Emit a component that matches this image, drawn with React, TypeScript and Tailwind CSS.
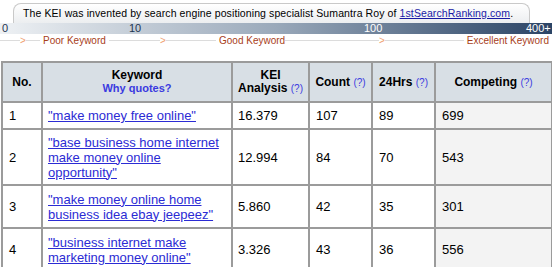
import React from 'react';

const rows = [
  { no: 1, kw: ['"make money free online"'], kei: '16.379', count: 107, hrs: 89, comp: 699 },
  { no: 2, kw: ['"base business home internet', 'make money online', 'opportunity"'], kei: '12.994', count: 84, hrs: 70, comp: 543 },
  { no: 3, kw: ['"make money online home', 'business idea ebay jeepeez"'], kei: '5.860', count: 42, hrs: 35, comp: 301 },
  { no: 4, kw: ['"business internet make', 'marketing money online"'], kei: '3.326', count: 43, hrs: 36, comp: 556 },
];

const Q = () => <span className="text-[10px] font-normal text-[#3a3ae0]">(?)</span>;

const Arrow = () => <span className="w-[6px] text-[10px] leading-none text-[#f0a070]">&gt;</span>;
const Line = ({ w }: { w: string }) => <div className={`h-px bg-[#dcdcdc] ${w}`} />;

export default function App() {
  return (
    <div className="w-[552px] h-[267px] overflow-hidden bg-white font-['Liberation_Sans',Arial,sans-serif]">
      {/* tab with credit text */}
      <div className="ml-[13px] mt-[3px] w-[517px] h-[20px] rounded-t-[8px] border border-b-0 border-[#c9c9c9] bg-gradient-to-b from-white to-[#eceef0] flex items-center pl-[9px] text-[10.5px] text-black tracking-[0.1px]">
        The KEI was invented by search engine positioning specialist Sumantra Roy of&nbsp;
        <span className="text-[#1a1aa6] underline">1stSearchRanking.com</span>.
      </div>

      {/* gradient scale */}
      <div className="h-[11px] bg-gradient-to-r from-[#eef1f4] via-[#9aa9ba] to-[#2b4465] relative text-[11px] leading-[11px]">
        <span className="absolute left-[2px] text-[#1e3552]">0</span>
        <span className="absolute left-[129px] text-[#1e3552]">10</span>
        <span className="absolute left-[364px] text-white">100</span>
        <span className="absolute left-[526px] text-white">400+</span>
      </div>

      {/* scale labels */}
      <div className="h-[13px] flex items-center text-[10px] text-[#a8401a] whitespace-nowrap">
        <Line w="w-[20px]" />
        <Arrow />
        <Line w="w-[14px]" />
        <span className="w-[69px] px-[3px]">Poor Keyword</span>
        <Line w="w-[51px]" />
        <Arrow />
        <Line w="w-[50px]" />
        <span className="w-[69px] px-[3px]">Good Keyword</span>
        <Line w="w-[94px]" />
        <Arrow />
        <Line w="flex-1" />
        <span className="pl-[3px] pr-[3px]">Excellent Keyword</span>
      </div>

      <table className="mt-[14px] ml-px w-[550px] table-fixed border-collapse border-2 border-[#9b9b9b] text-[13px] text-black">
        <colgroup>
          <col className="w-[40px]" />
          <col className="w-[190px]" />
          <col className="w-[77px]" />
          <col className="w-[63px]" />
          <col className="w-[63px]" />
          <col className="w-[117px]" />
        </colgroup>
        <thead>
          <tr className="h-[40px] bg-[#d8dfe5] text-[12px] font-bold leading-[13px]">
            <th className="border-2 border-[#9b9b9b]">No.</th>
            <th className="border-2 border-[#9b9b9b]">
              <div>Keyword</div>
              <div className="text-[11px] text-[#3a3ae0]">Why quotes?</div>
            </th>
            <th className="border-2 border-[#9b9b9b]">
              <div>KEI</div>
              <div>Analysis <Q /></div>
            </th>
            <th className="border-2 border-[#9b9b9b]">Count <Q /></th>
            <th className="border-2 border-[#9b9b9b]">24Hrs <Q /></th>
            <th className="border-2 border-[#9b9b9b]">Competing <Q /></th>
          </tr>
        </thead>
        <tbody className="leading-[15px]">
          {rows.map((r, i) => (
            <tr key={r.no} className={i === 0 ? 'h-[27px]' : i === 1 ? 'h-[56px]' : 'h-[43px]'}>
              <td className="border-2 border-[#9b9b9b] px-[6px]">{r.no}</td>
              <td className="border-2 border-[#9b9b9b] px-[5px]">
                {r.kw.map((l) => (
                  <div key={l} className="text-[#2b2bd4] underline">{l}</div>
                ))}
              </td>
              <td className="border-2 border-[#9b9b9b] px-[5px]">{r.kei}</td>
              <td className="border-2 border-[#9b9b9b] px-[6px]">{r.count}</td>
              <td className="border-2 border-[#9b9b9b] px-[6px]">{r.hrs}</td>
              <td className="border-2 border-[#9b9b9b] px-[6px] bg-[#f3f3f3]">{r.comp}</td>
            </tr>
          ))}
        </tbody>
      </table>
    </div>
  );
}
